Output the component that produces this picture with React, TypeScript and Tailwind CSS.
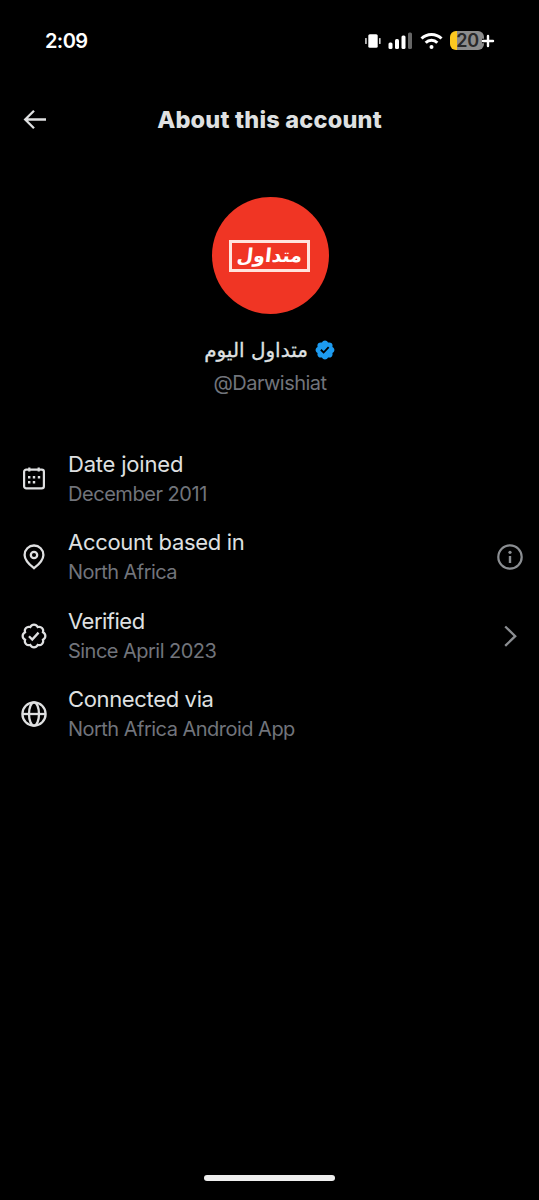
import type { ReactNode } from "react";

const badgePath =
  "M22.25 12c0-1.43-.88-2.67-2.19-3.34.46-1.39.2-2.9-.81-3.91s-2.52-1.27-3.91-.81c-.66-1.31-1.91-2.19-3.34-2.19s-2.67.88-3.33 2.19c-1.4-.46-2.91-.2-3.92.81s-1.26 2.52-.8 3.91c-1.31.67-2.2 1.91-2.2 3.34s.89 2.67 2.2 3.34c-.46 1.39-.21 2.9.8 3.91s2.52 1.26 3.91.81c.67 1.31 1.91 2.19 3.34 2.19s2.68-.88 3.34-2.19c1.39.45 2.9.2 3.91-.81s1.27-2.52.81-3.91c1.31-.67 2.19-1.91 2.19-3.34z";

const StatusBar = () => (
  <header className="flex h-[81px] items-center justify-between pl-[45px] pr-[44px] text-white">
    <span className="text-[20px] font-semibold leading-6 tracking-[-0.6px]">2:09</span>
    <div className="flex items-center">
      <svg width="16" height="16" viewBox="0 0 16 16" fill="currentColor">
        <rect x="3.3" y="1.3" width="9.4" height="13.4" rx="1.5" />
        <rect x="0.3" y="5" width="1.3" height="6" rx="0.6" />
        <rect x="14.2" y="5" width="1.3" height="6" rx="0.6" />
      </svg>
      <svg className="ml-[7px]" width="25" height="18" viewBox="0 0 25 18" fill="currentColor">
        <rect x="0.5" y="10.5" width="4" height="6.5" rx="1.5" />
        <rect x="7" y="7" width="4" height="10" rx="1.5" />
        <rect x="13.5" y="3.5" width="4" height="13.5" rx="1.5" />
        <rect x="20" y="0.5" width="4" height="16.5" rx="1.5" fill="#666" />
      </svg>
      <svg className="ml-[7px]" width="23" height="18" viewBox="0 0 23 18" fill="none" stroke="currentColor" strokeWidth="3">
        <path d="M1.5 6.5a14.2 14.2 0 0 1 20 0" />
        <path d="M5.7 10.7a8.2 8.2 0 0 1 11.6 0" />
        <circle cx="11.5" cy="14.9" r="2" fill="currentColor" stroke="none" />
      </svg>
      <div className="ml-[7px] flex items-center">
        <div className="flex h-[19px] w-[34px] items-center justify-center rounded-[6px] bg-linear-to-r from-[#fcc820] from-22% to-[#8c8c8c] to-22% pl-px text-[18px] font-semibold leading-none tracking-[-0.4px] text-[#292929]">
          20
        </div>
        <svg className="-ml-[3px]" width="14" height="14" viewBox="0 0 14 14">
          <path d="M7 1v12M1 7h12" stroke="#000" strokeWidth="4.4" />
          <path d="M7 2v10M2 7h10" stroke="#fff" strokeWidth="2.4" strokeLinecap="round" />
        </svg>
      </div>
    </div>
  </header>
);

const CalendarIcon = () => (
  <svg width="28" height="28" viewBox="0 0 28 28" fill="none" stroke="currentColor" strokeWidth="2.2">
    <rect x="4.1" y="4.6" width="19.8" height="18.8" rx="2.2" />
    <path d="M9.3 2.6v3.9M18.7 2.6v3.9" />
    <path d="M8 12.3h2.4M12.8 12.3h2.4M17.8 12.3h2.4M8 17.3h2.4M12.8 17.3h2.4" strokeWidth="2.4" />
  </svg>
);

const PinIcon = () => (
  <svg width="28" height="28" viewBox="0 0 28 28" fill="none" stroke="currentColor" strokeWidth="2.3">
    <path d="M14 25.2C10.7 22.6 4.6 17.8 4.6 11.9a9.4 9.4 0 0 1 18.8 0c0 5.9-6.1 10.7-9.4 13.3z" />
    <circle cx="14" cy="12" r="3.2" />
  </svg>
);

const VerifiedIcon = () => (
  <svg width="28" height="28" viewBox="0 0 24 24" fill="none" stroke="currentColor" strokeWidth="2">
    <path transform="translate(.6 .6) scale(.95)" d={badgePath} />
    <path d="m7.7 12.2 2.8 2.8 5.4-5.9" />
  </svg>
);

const GlobeIcon = () => (
  <svg width="28" height="28" viewBox="0 0 28 28" fill="none" stroke="currentColor" strokeWidth="2.3">
    <circle cx="14" cy="14" r="11.6" />
    <ellipse cx="14" cy="14" rx="5" ry="11.6" />
    <path d="M2.4 14h23.2" />
  </svg>
);

const InfoIcon = () => (
  <svg width="28" height="28" viewBox="0 0 28 28" fill="none" stroke="currentColor" strokeWidth="2.2">
    <circle cx="14" cy="14" r="11.7" />
    <path d="M14 13v7" strokeWidth="2.4" />
    <circle cx="14" cy="9.3" r="1.6" fill="currentColor" stroke="none" />
  </svg>
);

const ChevronIcon = () => (
  <svg width="28" height="28" viewBox="0 0 28 28" fill="none" stroke="currentColor" strokeWidth="2.3">
    <path d="m9.2 4.5 10 9.7-10 9.7" />
  </svg>
);

type Row = {
  title: string;
  detail: string;
  titleClass: string;
  detailClass: string;
  icon: ReactNode;
  action?: ReactNode;
};

const rows: Row[] = [
  { title: "Date joined", detail: "December 2011", titleClass: "tracking-[-0.2px]", detailClass: "tracking-[-0.46px]", icon: <CalendarIcon /> },
  { title: "Account based in", detail: "North Africa", titleClass: "tracking-[-0.3px]", detailClass: "tracking-[-0.55px]", icon: <PinIcon />, action: <InfoIcon /> },
  { title: "Verified", detail: "Since April 2023", titleClass: "tracking-[-0.5px]", detailClass: "tracking-[-0.53px]", icon: <VerifiedIcon />, action: <ChevronIcon /> },
  { title: "Connected via", detail: "North Africa Android App", titleClass: "tracking-[-0.35px]", detailClass: "tracking-[-0.52px]", icon: <GlobeIcon /> },
];

const App = () => {
  return (
    <div className="flex h-[1200px] w-[539px] flex-col bg-black font-['Inter','DejaVu_Sans',sans-serif] text-[#dfe0e1]">
      <StatusBar />
      <nav className="grid h-[77px] grid-cols-[70px_1fr_70px] items-center">
        <svg className="ml-[22px]" width="26" height="26" viewBox="0 0 26 26" fill="none" stroke="currentColor" strokeWidth="2.3">
          <path d="M24 12.5H3.2M12 3.7 3.2 12.5l8.8 8.8" />
        </svg>
        <h1 className="text-center text-[23.5px] font-extrabold leading-7 tracking-[0.2px]">About this account</h1>
      </nav>

      <section className="flex flex-col items-center pl-px pt-[39px]">
        <div className="flex size-[117px] items-center justify-center rounded-full bg-[#f03524] text-white">
          <div className="mr-px flex h-8 w-[81px] items-center justify-center border-[3px] border-[#ffe4de]">
            <span dir="rtl" className="-skew-x-6 font-['DejaVu_Sans',sans-serif] text-[19px] font-bold leading-none">
              متداول
            </span>
          </div>
        </div>
        <div className="mt-[20px] flex h-8 items-center gap-[6px]">
          <span dir="rtl" className="font-['DejaVu_Sans',sans-serif] text-[20px] leading-8 [-webkit-text-stroke:0.3px_currentColor]">
            متداول اليوم
          </span>
          <svg width="22" height="22" viewBox="0 0 24 24">
            <path d={badgePath} fill="#1d9bf0" />
            <path d="m7.5 11.75 3 3L16 8.8" fill="none" stroke="#000" strokeWidth="2" />
          </svg>
        </div>
        <p className="mt-px h-8 text-[20px] leading-8 tracking-[-0.55px] text-[#71747b]">@Darwishiat</p>
      </section>

      <ul className="mt-[40.6px] flex flex-col">
        {rows.map((row) => (
          <li key={row.title} className="flex h-[78.4px] items-center pl-5 pr-[15px]">
            {row.icon}
            <div className="ml-5 flex-1 whitespace-nowrap">
              <p className="text-[22px] leading-[30px]">
                <span className={row.titleClass}>{row.title}</span>
              </p>
              <p className="text-[20px] leading-[30px] text-[#71747b]">
                <span className={row.detailClass}>{row.detail}</span>
              </p>
            </div>
            <div className="text-[#8b8e92]">{row.action}</div>
          </li>
        ))}
      </ul>

      <footer className="mt-auto flex justify-center pb-[19px]">
        <div className="h-[6px] w-[131px] rounded-full bg-[#eeeeee]" />
      </footer>
    </div>
  );
};

export default App;
